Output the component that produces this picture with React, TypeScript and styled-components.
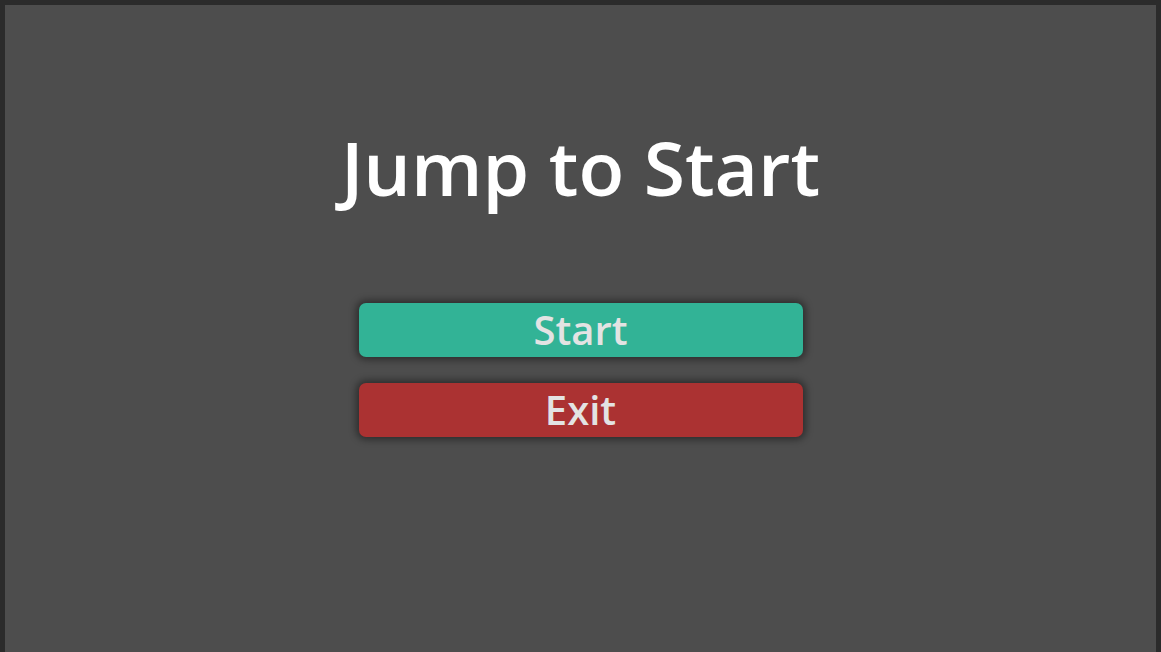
import React from "react";
import styled, { createGlobalStyle } from "styled-components";

const Global = createGlobalStyle`
  html, body { margin: 0; padding: 0; background: #2b2b2b; }
  body { font-family: "Open Sans", "Noto Sans", sans-serif; }
`;

const Frame = styled.div`
  box-sizing: border-box;
  width: 1161px;
  height: 652px;
  border: 5px solid #2b2b2b;
  border-bottom: none;
  background: #4d4d4d;
  display: flex;
  flex-direction: column;
  align-items: center;
`;

const Title = styled.h1`
  margin: 106px 0 0;
  font-family: "Open Sans", sans-serif;
  font-weight: 600;
  font-size: 75px;
  line-height: 112px;
  color: #ffffff;
`;

const Menu = styled.div`
  margin-top: 80px;
  display: flex;
  flex-direction: column;
  gap: 26px;
`;

const MenuButton = styled.button<{ $bg: string }>`
  width: 444px;
  height: 54px;
  border: none;
  border-radius: 7px;
  background: ${(p) => p.$bg};
  box-shadow: 0 0 7px 3px rgba(0, 0, 0, 0.4);
  color: #e3e3e3;
  font-family: "Open Sans", sans-serif;
  font-weight: 600;
  font-size: 40px;
  line-height: 54px;
  padding: 0;
  cursor: pointer;
`;

export default function App() {
  return (
    <>
      <Global />
      <Frame>
        <Title>Jump to Start</Title>
        <Menu>
          <MenuButton $bg="#32b396">Start</MenuButton>
          <MenuButton $bg="#ab3232">Exit</MenuButton>
        </Menu>
      </Frame>
    </>
  );
}
